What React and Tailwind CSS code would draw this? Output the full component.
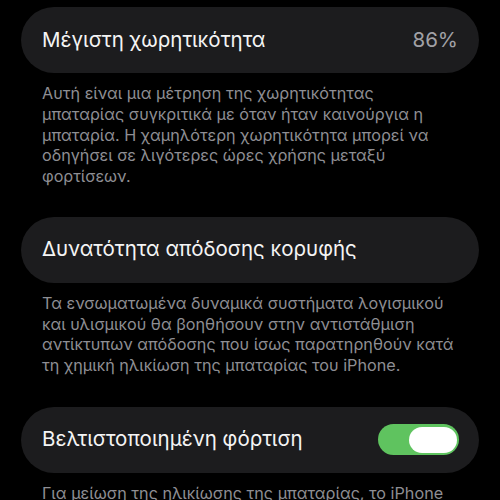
export default function App() {
  const font = { fontFamily: 'Inter, "Noto Sans", sans-serif' };
  return (
    <div className="w-[500px] h-[500px] overflow-hidden bg-black px-[21px] pt-[7px]" style={font}>
      <div className="h-[66px] rounded-full bg-[#1c1c1e] flex items-center justify-between pl-[21px] pr-[21px]">
        <span className="text-[20.5px] text-[#f4f4f4]">Μέγιστη χωρητικότητα</span>
        <span className="text-[20.5px] text-[#a1a1a6]">86%</span>
      </div>
      <div className="mt-[10px] pl-[21px] text-[16.2px] leading-[20.75px] text-[#8e8e93] whitespace-nowrap">
        <div>Αυτή είναι μια μέτρηση της χωρητικότητας</div>
        <div>μπαταρίας συγκριτικά με όταν ήταν καινούργια η</div>
        <div>μπαταρία. Η χαμηλότερη χωρητικότητα μπορεί να</div>
        <div>οδηγήσει σε λιγότερες ώρες χρήσης μεταξύ</div>
        <div>φορτίσεων.</div>
      </div>
      <div className="mt-[30px] h-[66px] rounded-full bg-[#1c1c1e] flex items-center pl-[21px] pr-[21px]">
        <span className="text-[20.5px] text-[#f4f4f4]">Δυνατότητα απόδοσης κορυφής</span>
      </div>
      <div className="mt-[10px] pl-[21px] text-[16.2px] leading-[20.75px] text-[#8e8e93] whitespace-nowrap">
        <div>Τα ενσωματωμένα δυναμικά συστήματα λογισμικού</div>
        <div>και υλισμικού θα βοηθήσουν στην αντιστάθμιση</div>
        <div>αντίκτυπων απόδοσης που ίσως παρατηρηθούν κατά</div>
        <div>τη χημική ηλικίωση της μπαταρίας του iPhone.</div>
      </div>
      <div className="mt-[31px] h-[66px] rounded-full bg-[#1c1c1e] flex items-center justify-between pl-[21px] pr-[20px]">
        <span className="text-[20.5px] text-[#f4f4f4]">Βελτιστοποιημένη φόρτιση</span>
        <div className="w-[81px] h-[31px] rounded-full bg-[#5fc35f] flex items-center justify-end pr-[2px]">
          <div className="w-[48px] h-[26px] rounded-full bg-white" />
        </div>
      </div>
      <div className="mt-[10px] pl-[21px] text-[16.2px] leading-[20.75px] text-[#8e8e93] whitespace-nowrap">
        <div>Για μείωση της ηλικίωσης της μπαταρίας, το iPhone</div>
      </div>
    </div>
  );
}
